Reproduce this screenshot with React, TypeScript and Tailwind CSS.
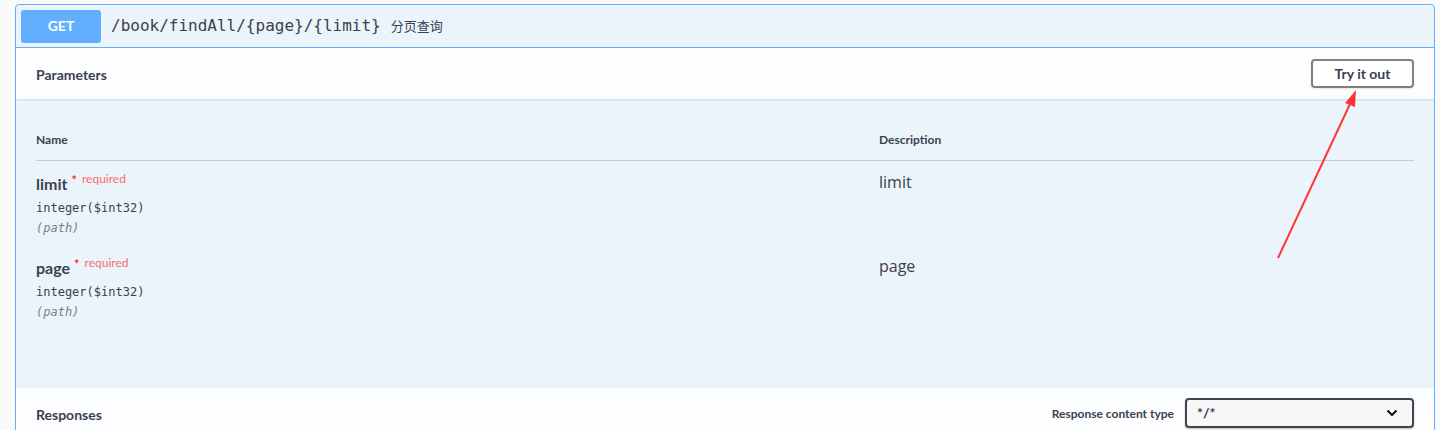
const titleFont = "font-['Lato','Noto_Sans',sans-serif]";
const monoFont = "font-['DejaVu_Sans_Mono','Liberation_Mono',monospace]";

const params = [
  { name: 'limit', type: 'integer($int32)', where: '(path)', desc: 'limit' },
  { name: 'page', type: 'integer($int32)', where: '(path)', desc: 'page' },
];

const Arrow = () => (
  <svg className="pointer-events-none absolute left-0 top-0" width="1440" height="430">
    <line x1="1278" y1="258" x2="1350" y2="104" stroke="#ff3535" strokeWidth="2" />
    <polygon points="1356,90 1345,103 1355,107" fill="#ff3535" />
  </svg>
);

export default function App() {
  return (
    <div className="relative h-[430px] w-full overflow-hidden bg-[#fafafa] pl-[15px] pr-[5px] pt-[4px]">
      <div className="overflow-hidden rounded-t border border-[#61affe] bg-[#ebf3fb]">
        {/* summary */}
        <div className="flex h-[43px] items-center border-b border-[#61affe] px-[5px]">
          <span
            className={`flex h-[33px] w-[80px] items-center justify-center rounded-[3px] bg-[#61affe] text-sm font-bold text-white ${titleFont}`}
          >
            GET
          </span>
          <span className={`ml-[10px] text-base text-[#3b4151] ${monoFont}`}>/book/findAll/{'{page}'}/{'{limit}'}</span>
          <span className="ml-[10px] text-[13px] text-[#3b4151] font-['Noto_Sans_CJK_SC',sans-serif]">分页查询</span>
        </div>

        {/* parameters header */}
        <div className="flex h-[51px] items-center justify-between bg-[#fbfdfe] pl-5 pr-[20px] shadow-[0_1px_2px_rgba(0,0,0,0.1)]">
          <h4 className={`mt-[2px] text-sm font-bold text-[#3b4151] ${titleFont}`}>Parameters</h4>
          <button
            type="button"
            className={`h-[29px] w-[103px] rounded border-2 border-[#808080] bg-white text-sm font-bold text-[#3b4151] shadow-[0_1px_2px_rgba(0,0,0,0.1)] ${titleFont}`}
          >
            Try it out
          </button>
        </div>

        {/* parameters table */}
        <div className="h-[289px] pl-5 pr-[20px] pt-[33px]">
          <div className={`grid grid-cols-[843px_1fr] border-b border-[#c7ccd5] pb-[12px] text-xs font-bold text-[#3b4151] ${titleFont}`}>
            <span>Name</span>
            <span>Description</span>
          </div>
          {params.map((p) => (
            <div key={p.name} className="grid h-[84px] grid-cols-[843px_1fr] pt-[11px]">
              <div>
                <div className={`flex items-start text-[#3b4151] ${titleFont}`}>
                  <span className="text-base font-bold leading-[24px]">{p.name}</span>
                  <span className="ml-[4px] mt-[2px] text-[13px] leading-none text-[#ff0000]">*</span>
                  <span className="ml-[5px] mt-[1px] text-[12px] leading-none text-[#ff6b6b]">required</span>
                </div>
                <div className={`mt-[3px] text-xs leading-[18px] text-[#3b4151] ${monoFont}`}>{p.type}</div>
                <div className={`mt-[2px] text-xs italic leading-[18px] text-[#808080] ${monoFont}`}>{p.where}</div>
              </div>
              <div className="-mt-[2px] text-base leading-[24px] text-[#3b4151] font-['Open_Sans',sans-serif]">{p.desc}</div>
            </div>
          ))}
        </div>

        {/* responses header */}
        <div className="flex h-[60px] items-start justify-between bg-[#fbfdfe] pl-5 pr-[20px] pt-[10px]">
          <div className="flex h-[30px] items-center pt-[4px]">
            <h4 className={`text-sm font-bold text-[#3b4151] ${titleFont}`}>Responses</h4>
          </div>
          <div className="flex h-[30px] items-center">
            <span className={`mr-[11px] mt-[2px] text-xs font-bold text-[#3b4151] ${titleFont}`}>Response content type</span>
            <div
              className={`flex h-[30px] w-[229px] items-center justify-between rounded border-2 border-[#41444e] bg-[#f7f7f7] pl-[10px] pr-[14px] text-sm font-bold text-[#3b4151] shadow-[0_1px_2px_rgba(0,0,0,0.25)] ${titleFont}`}
            >
              <span>*/*</span>
              <svg width="12" height="8" viewBox="0 0 12 8">
                <path d="M1.5 1.5 6 6 10.5 1.5" fill="none" stroke="#111" strokeWidth="2" />
              </svg>
            </div>
          </div>
        </div>
      </div>
      <Arrow />
    </div>
  );
}
